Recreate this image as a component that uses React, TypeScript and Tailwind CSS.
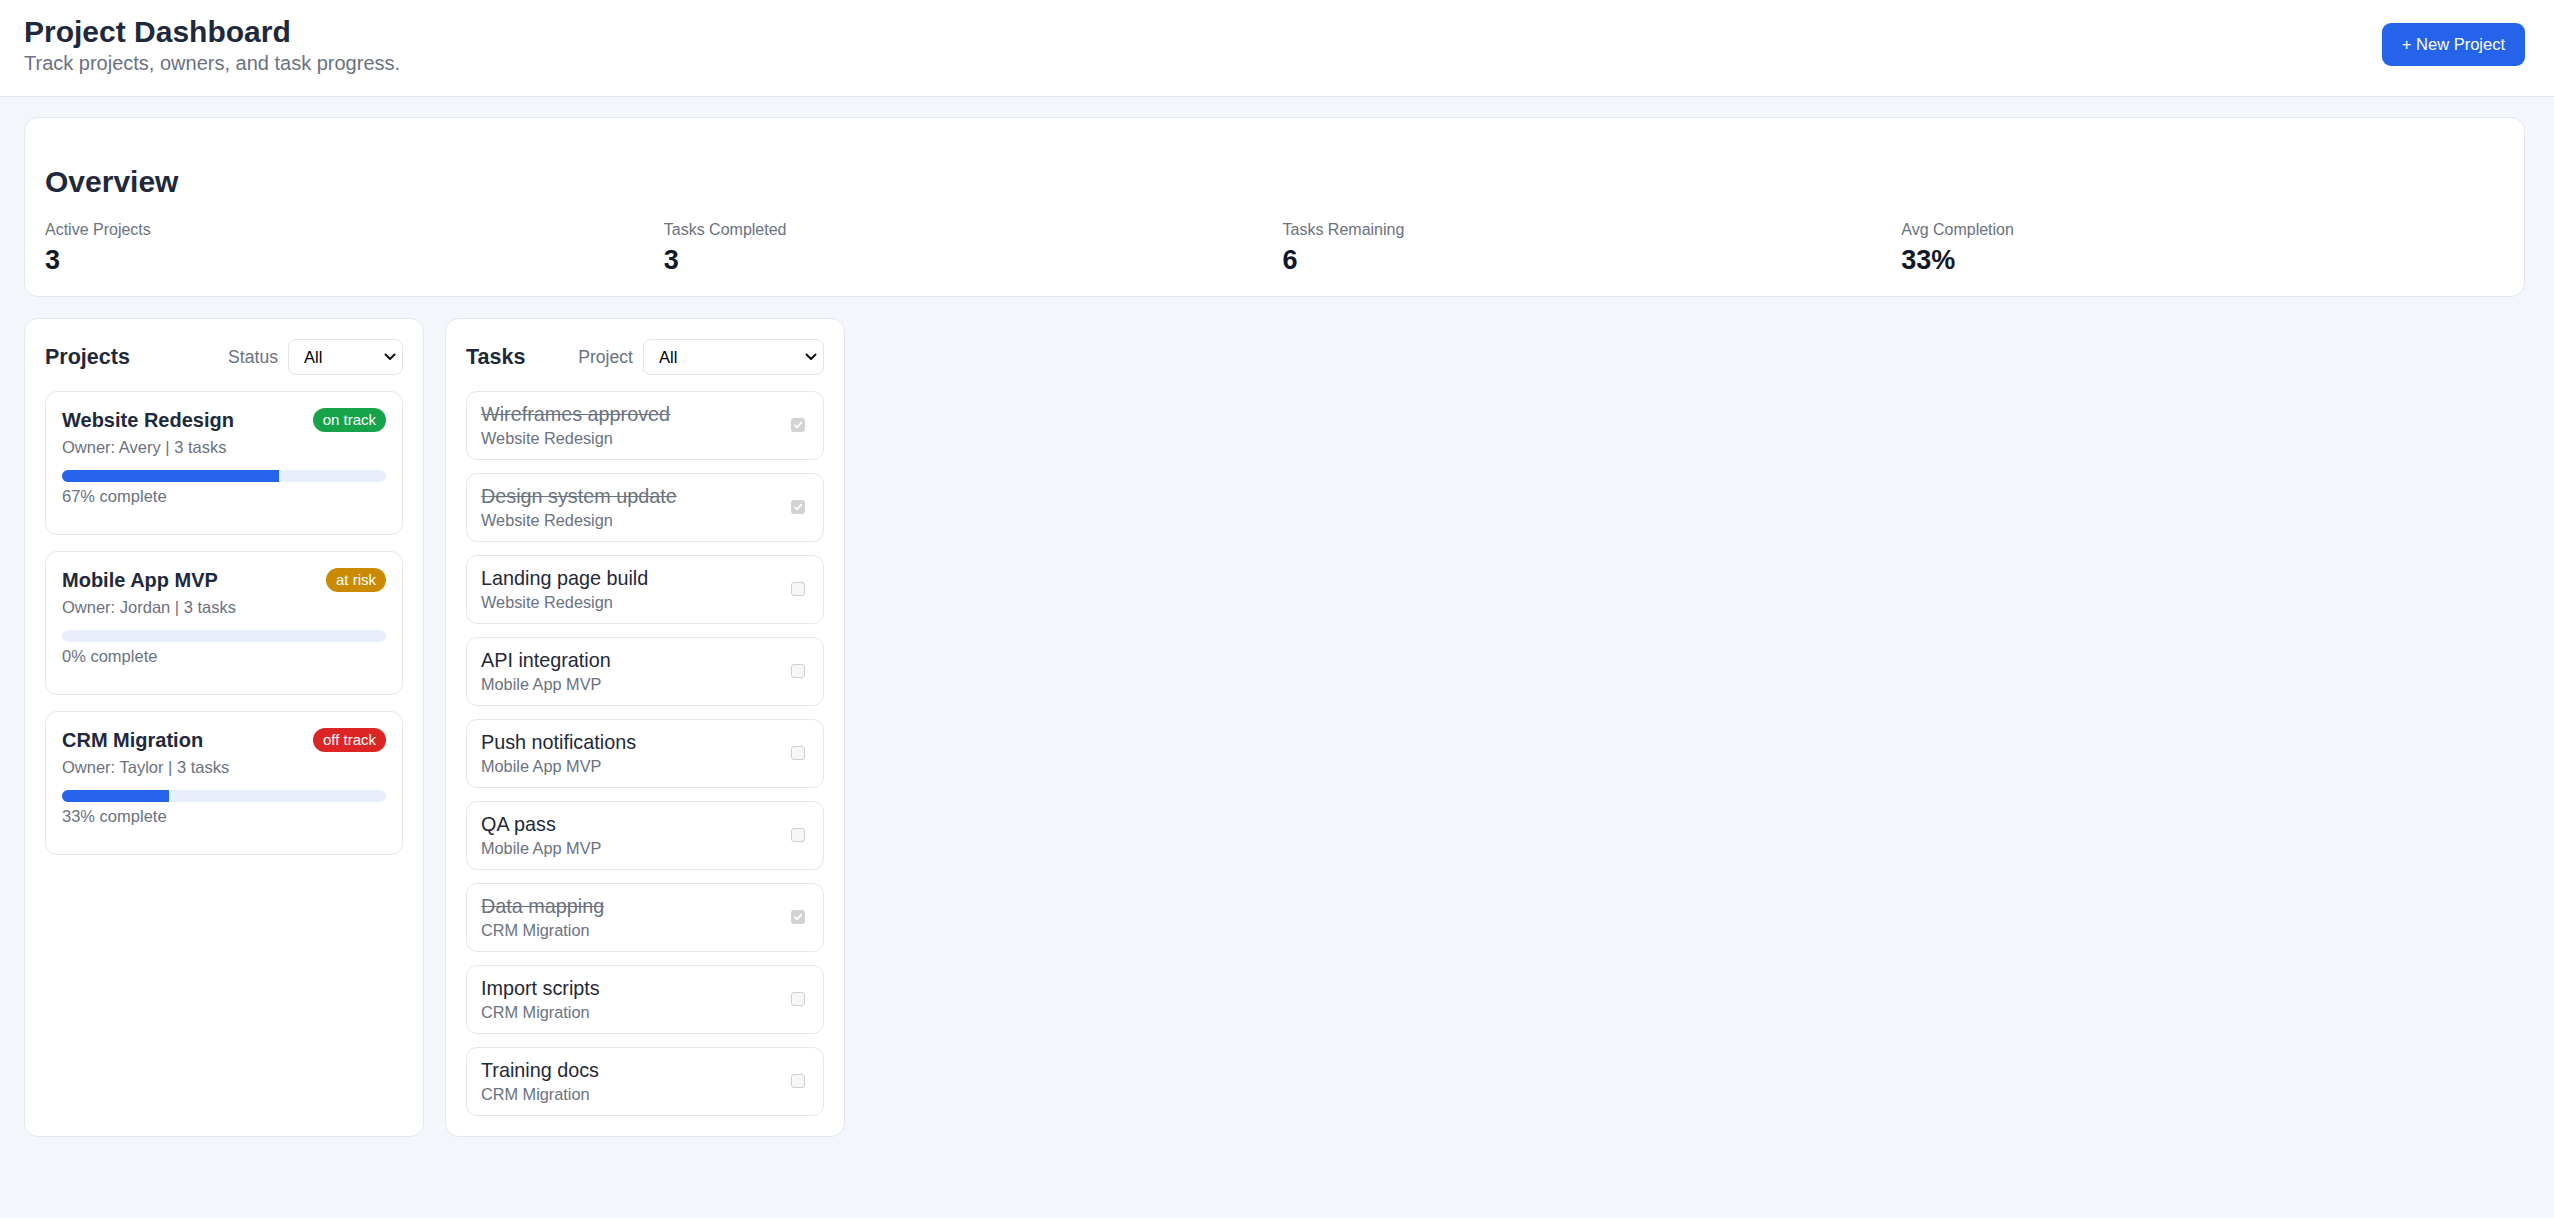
import React from "react";

type Status = "on track" | "at risk" | "off track";

const projects: { name: string; owner: string; tasks: number; pct: number; status: Status }[] = [
  { name: "Website Redesign", owner: "Avery", tasks: 3, pct: 67, status: "on track" },
  { name: "Mobile App MVP", owner: "Jordan", tasks: 3, pct: 0, status: "at risk" },
  { name: "CRM Migration", owner: "Taylor", tasks: 3, pct: 33, status: "off track" },
];

const tasks = [
  { title: "Wireframes approved", project: "Website Redesign", done: true },
  { title: "Design system update", project: "Website Redesign", done: true },
  { title: "Landing page build", project: "Website Redesign", done: false },
  { title: "API integration", project: "Mobile App MVP", done: false },
  { title: "Push notifications", project: "Mobile App MVP", done: false },
  { title: "QA pass", project: "Mobile App MVP", done: false },
  { title: "Data mapping", project: "CRM Migration", done: true },
  { title: "Import scripts", project: "CRM Migration", done: false },
  { title: "Training docs", project: "CRM Migration", done: false },
];

const stats = [
  { label: "Active Projects", value: "3" },
  { label: "Tasks Completed", value: "3" },
  { label: "Tasks Remaining", value: "6" },
  { label: "Avg Completion", value: "33%" },
];

const badgeColor: Record<Status, string> = {
  "on track": "bg-[#16a34a]",
  "at risk": "bg-[#ca8a04]",
  "off track": "bg-[#dc2626]",
};

function Chevron() {
  return (
    <svg width="12" height="8" viewBox="0 0 12 8" className="pointer-events-none absolute right-[7px] top-1/2 -translate-y-1/2">
      <path d="M1.5 1.5 L6 6 L10.5 1.5" fill="none" stroke="#111" strokeWidth="2" strokeLinecap="round" strokeLinejoin="round" />
    </svg>
  );
}

function Select({ label, width }: { label: string; width: string }) {
  return (
    <div className="flex items-center gap-[10px]">
      <span className="text-[17.6px] text-[#6b7280]">{label}</span>
      <div className={`relative ${width}`}>
        <select className="h-[36px] w-full appearance-none rounded-[8px] border border-[#e2e5ea] bg-white pl-[15px] font-[family-name:Liberation_Sans,Arial,sans-serif] text-[16.5px] text-black outline-none">
          <option>All</option>
        </select>
        <Chevron />
      </div>
    </div>
  );
}

function Checkbox({ checked }: { checked: boolean }) {
  if (checked) {
    return (
      <span className="mr-[4px] flex h-[14px] w-[14px] shrink-0 items-center justify-center rounded-[3px] bg-[#d3d3d3]">
        <svg width="10" height="10" viewBox="0 0 10 10">
          <path d="M1.8 5.2 L4 7.3 L8.3 2.6" fill="none" stroke="#fff" strokeWidth="1.8" strokeLinecap="round" strokeLinejoin="round" />
        </svg>
      </span>
    );
  }
  return <span className="mr-[4px] h-[14px] w-[14px] shrink-0 rounded-[3px] border border-[#cfcfcf] bg-[#f7f7f7]" />;
}

export default function App() {
  return (
    <div className="min-h-screen bg-[#f3f6fb] font-[family-name:Liberation_Sans,Arial,sans-serif] text-[#1e293b]">
      <header className="flex items-center justify-between border-b border-[#e3e7ee] bg-white pb-[20px] pl-6 pr-[29px] pt-[13px]">
        <div>
          <h1 className="text-[30px] font-bold leading-[37px] text-[#1e293b]">Project Dashboard</h1>
          <p className="text-[20px] leading-[26px] text-[#6b7280]">Track projects, owners, and task progress.</p>
        </div>
        <button className="h-[43px] rounded-[9px] bg-[#2563eb] px-5 font-[family-name:Liberation_Sans,Arial,sans-serif] text-[16.5px] text-white">
          + New Project
        </button>
      </header>

      <main className="flex flex-col gap-[21px] pb-10 pl-6 pr-[29px] pt-5">
        <section className="rounded-[14px] border border-[#e3e7ee] bg-white p-5">
          <h2 className="mb-[21px] mt-[26px] text-[30px] font-bold leading-[35px] text-[#1e293b]">Overview</h2>
          <div className="grid grid-cols-4 gap-4">
            {stats.map((s) => (
              <div key={s.label}>
                <div className="text-[16px] leading-[20px] text-[#6b7280]">{s.label}</div>
                <div className="mt-1 text-[27px] font-bold leading-[32px] text-[#111827]">{s.value}</div>
              </div>
            ))}
          </div>
        </section>

        <div className="grid grid-cols-[400px_400px] gap-[21px]">
          <section className="rounded-[14px] border border-[#e3e7ee] bg-white p-5">
            <div className="mb-4 flex h-[36px] items-center justify-between">
              <h3 className="text-[21.5px] font-bold text-[#1e293b]">Projects</h3>
              <Select label="Status" width="w-[115px]" />
            </div>
            <div className="flex flex-col gap-4">
              {projects.map((p) => (
                <div key={p.name} className="rounded-[12px] border border-[#e3e7ee] px-4 pb-[27px] pt-4">
                  <div className="flex h-6 items-center justify-between">
                    <span className="text-[20px] font-bold leading-6 text-[#1e293b]">{p.name}</span>
                    <span className={`flex h-6 items-center rounded-full px-[10px] text-[15px] text-white ${badgeColor[p.status]}`}>
                      {p.status}
                    </span>
                  </div>
                  <div className="mt-1 text-[16.5px] leading-[22px] text-[#6b7280]">
                    Owner: {p.owner} | {p.tasks} tasks
                  </div>
                  <div className="mt-3 h-3 overflow-hidden rounded-full bg-[#e8eefb]">
                    <div className="h-full bg-[#2563eb]" style={{ width: `${p.pct}%` }} />
                  </div>
                  <div className="mt-[3px] text-[16.5px] leading-[22px] text-[#6b7280]">{p.pct}% complete</div>
                </div>
              ))}
            </div>
          </section>

          <section className="rounded-[14px] border border-[#e3e7ee] bg-white p-5">
            <div className="mb-4 flex h-[36px] items-center justify-between">
              <h3 className="text-[21.5px] font-bold text-[#1e293b]">Tasks</h3>
              <Select label="Project" width="w-[181px]" />
            </div>
            <div className="flex flex-col gap-[13px]">
              {tasks.map((t) => (
                <div key={t.title} className="flex items-center justify-between rounded-[11px] border border-[#e3e7ee] pb-[11px] pl-[14px] pr-[14px] pt-[10px]">
                  <div>
                    <div className={`text-[19.8px] leading-6 ${t.done ? "text-[#6b7280] line-through" : "text-[#1f2937]"}`}>
                      {t.title}
                    </div>
                    <div className="mt-[2px] text-[16.3px] leading-5 text-[#6b7280]">{t.project}</div>
                  </div>
                  <Checkbox checked={t.done} />
                </div>
              ))}
            </div>
          </section>
        </div>
      </main>
    </div>
  );
}
